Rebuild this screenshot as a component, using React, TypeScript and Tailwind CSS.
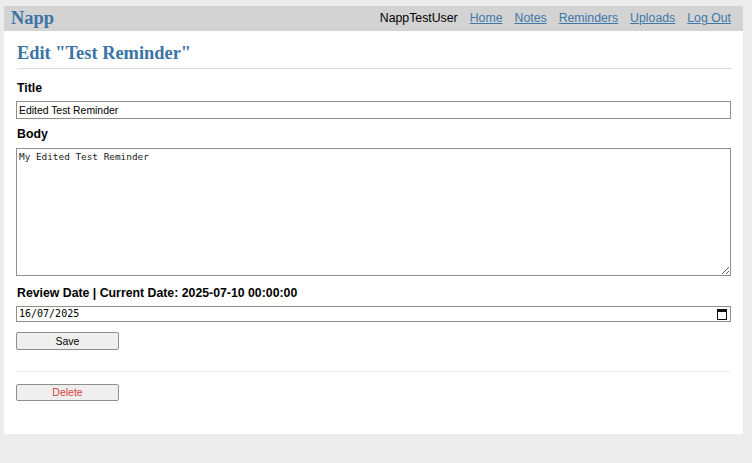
import React from "react";

export default function App() {
  const sans = { fontFamily: '"Liberation Sans", Arial, sans-serif' };
  return (
    <div className="min-h-[463px] w-full bg-[#ececec] pt-[6px] pl-[4px]" style={sans}>
      <div className="w-[739px] h-[428px] bg-white flex flex-col">
        <div className="h-[25px] bg-[#d3d3d3] flex items-center justify-between pl-[7px] pr-[12px]">
          <span
            className="text-[18.4px] font-bold text-[#3b74a5] leading-none"
            style={{ fontFamily: '"Liberation Serif", "Times New Roman", serif' }}
          >
            Napp
          </span>
          <div className="flex items-center gap-[12px] text-[12.3px] leading-none">
            <span className="text-black">NappTestUser</span>
            <a className="text-[#3f78a9] underline" href="#">Home</a>
            <a className="text-[#3f78a9] underline" href="#">Notes</a>
            <a className="text-[#3f78a9] underline" href="#">Reminders</a>
            <a className="text-[#3f78a9] underline" href="#">Uploads</a>
            <a className="text-[#3f78a9] underline" href="#">Log Out</a>
          </div>
        </div>
        <div className="px-[12px] flex flex-col">
          <h1
            className="mt-[11px] ml-[1px] text-[18.4px] font-bold text-[#3b74a5] leading-[22px] pb-[4px] border-b border-[#dddddd]"
            style={{ fontFamily: '"Liberation Serif", "Times New Roman", serif' }}
          >
            Edit "Test Reminder"
          </h1>
          <label className="mt-[12px] ml-[1px] text-[12.3px] font-bold text-black leading-[14px]">Title</label>
          <input
            className="mt-[6px] h-[18px] w-full border border-[#8f8f8f] px-[2px] text-[10.4px] text-black outline-none"
            style={sans}
            defaultValue="Edited Test Reminder"
          />
          <label className="mt-[8px] ml-[1px] text-[12.3px] font-bold text-black leading-[14px]">Body</label>
          <textarea
            className="mt-[7px] h-[128px] w-full border border-[#8f8f8f] px-[2px] py-[1px] text-[9.4px] text-[#222] outline-none block"
            style={{ fontFamily: '"DejaVu Sans Mono", "Liberation Mono", monospace' }}
            defaultValue="My Edited Test Reminder"
          />
          <label className="mt-[10px] ml-[1px] text-[12.3px] font-bold text-black leading-[14px]">
            Review Date | Current Date: 2025-07-10 00:00:00
          </label>
          <div className="mt-[6px] h-[16px] w-full border border-[#8f8f8f] flex items-center justify-between pl-[2px] pr-[3px]">
            <span
              className="text-[10px] text-black leading-none"
              style={{ fontFamily: '"DejaVu Sans Mono", "Liberation Mono", monospace' }}
            >
              16/07/2025
            </span>
            <svg width="10" height="11" viewBox="0 0 10 11">
              <rect x="0.5" y="0.5" width="9" height="10" fill="none" stroke="#111" strokeWidth="1" />
              <rect x="0.5" y="0.5" width="9" height="2.5" fill="#111" />
            </svg>
          </div>
          <button
            className="mt-[10px] h-[18px] w-[103px] bg-[#efefef] border border-[#8f8f8f] rounded-[2px] text-[10.5px] text-black leading-none"
            style={sans}
          >
            Save
          </button>
          <div className="mt-[21px] h-px w-full bg-[#eeeeee]" />
          <button
            className="mt-[12px] h-[17px] w-[103px] bg-[#efefef] border border-[#8f8f8f] rounded-[2px] text-[10.5px] text-[#d9413c] leading-none"
            style={sans}
          >
            Delete
          </button>
        </div>
      </div>
    </div>
  );
}
